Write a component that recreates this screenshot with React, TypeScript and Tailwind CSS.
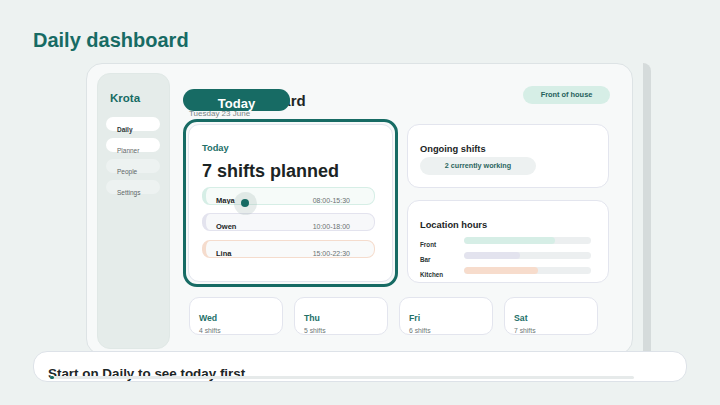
import React from "react";

const shifts = [
  { name: "Maya", time: "08:00-15:30", row: "border-[#d6eee6] bg-[#f6fbf9]" },
  { name: "Owen", time: "10:00-18:00", row: "border-[#e3e3ee] bg-[#f7f8fa]" },
  { name: "Lina", time: "15:00-22:30", row: "border-[#f5dccd] bg-[#f9fafa]" },
];

const hours = [
  { label: "Front", pct: 72, fill: "bg-[#d6eee6]" },
  { label: "Bar", pct: 44, fill: "bg-[#e3e3ee]" },
  { label: "Kitchen", pct: 58, fill: "bg-[#f7dccc]" },
];

const days = [
  { d: "Wed", n: "4 shifts" },
  { d: "Thu", n: "5 shifts" },
  { d: "Fri", n: "6 shifts" },
  { d: "Sat", n: "7 shifts" },
];

const nav = [
  { label: "Daily", cls: "bg-white font-bold text-[#2a3636]" },
  { label: "Planner", cls: "bg-white text-[#5b6565]" },
  { label: "People", cls: "bg-[#edf2f1] text-[#5b6565]" },
  { label: "Settings", cls: "bg-[#edf2f1] text-[#5b6565]" },
];

export default function App() {
  return (
    <div className="relative flex h-[405px] w-[720px] flex-col overflow-hidden bg-[#edf2f1] font-['Liberation_Sans',Arial,sans-serif]">
      <h1 className="ml-[33px] mt-[28px] text-[20px] font-bold leading-[24px] text-[#176b64]">
        Daily dashboard
      </h1>

      {/* back strip of the device */}
      <div className="absolute left-[643px] top-[63px] h-[288px] w-[8px] rounded-tr-[10px] bg-[#d5dbdb]" />

      {/* device frame */}
      <div className="relative ml-[86px] mt-[11px] flex h-[292px] w-[547px] gap-[13px] rounded-[16px] border border-[#dde3e5] bg-[#f7f9f9] pb-[5px] pl-[10px] pt-[9px]">
        {/* sidebar */}
        <div className="flex w-[73px] flex-col rounded-[13px] border border-[#e0e8e6] bg-[#e5ecea] pl-[8px] pt-[17px]">
          <div className="pl-[4px] text-[11.5px] font-bold leading-[14px] text-[#176b64]">Krota</div>
          <div className="mt-[12px] flex flex-col gap-[7px]">
            {nav.map((n) => (
              <div
                key={n.label}
                className={`h-[14px] w-[54px] rounded-[7px] pl-[11px] pt-[8.5px] text-[6.5px] leading-[8px] ${n.cls}`}
              >
                {n.label}
              </div>
            ))}
          </div>
        </div>

        {/* main */}
        <div className="flex w-[427px] flex-col pt-[14px]">
          {/* header */}
          <div className="relative flex h-[32px] justify-between">
            <div className="pl-[6px] pt-[6px]">
              <div className="text-[15px] font-bold leading-[16px] text-[#1d2626]">Daily dashboard</div>
              <div className="mt-[0px] text-[8px] leading-[10px] text-[#7a8484]">Tuesday 23 June</div>
            </div>
            <div className="absolute left-0 top-[2px] flex h-[22px] w-[107px] justify-center rounded-[11px] bg-[#176b64] pt-[8px] text-[13px] font-bold leading-[13px] text-white">
              Today
            </div>
            <div className="mt-[-1px] flex h-[18px] w-[87px] items-center justify-center rounded-full bg-[#d6eee6] text-[7.4px] font-bold text-[#25605b]">
              Front of house
            </div>
          </div>

          {/* content row */}
          <div className="flex gap-[9px]">
            {/* Today card */}
            <div className="relative h-[168px] w-[215px] rounded-[14px] border-[3px] border-[#176b64] p-[2px]">
              <div className="h-full w-full rounded-[11px] border border-[#e3e5ee] bg-white pl-[13px] pt-[18px]">
                <div className="text-[9.3px] font-bold leading-[11px] text-[#237068]">Today</div>
                <div className="mt-[6px] text-[18px] font-bold leading-[22px] text-[#1b2424]">7 shifts planned</div>
                <div className="mt-[4.5px] flex flex-col gap-[8.5px]">
                  {shifts.map((s) => (
                    <div
                      key={s.name}
                      className={`flex h-[18px] w-[173px] justify-between overflow-hidden rounded-[8px] border border-l-[4px] pl-[10px] pr-[24px] pt-[8px] text-[7px] leading-[10px] ${s.row}`}
                    >
                      <span className="text-[7.5px] font-bold text-[#1d2626]">{s.name}</span>
                      <span className="text-[#6a7272]">{s.time}</span>
                    </div>
                  ))}
                </div>
              </div>
              {/* cursor */}
              <div className="absolute left-[47.5px] top-[69.5px] h-[23px] w-[23px] rounded-full bg-[#9fb3b1]/25" />
              <div className="absolute left-[55px] top-[77px] h-[8px] w-[8px] rounded-full bg-[#176b64]" />
            </div>

            {/* right column */}
            <div className="mt-[5px] flex w-[202px] flex-col gap-[12px]">
              <div className="h-[64px] rounded-[12px] border border-[#e3e5ee] bg-white pl-[12px] pt-[19px]">
                <div className="text-[9.3px] font-bold leading-[11px] text-[#1b2424]">Ongoing shifts</div>
                <div className="mt-[2px] flex h-[18px] w-[116px] items-center justify-center rounded-full bg-[#edf1f1] text-[7.2px] font-bold text-[#2b6560]">
                  2 currently working
                </div>
              </div>
              <div className="h-[83px] rounded-[12px] border border-[#e3e5ee] bg-white pl-[12px] pt-[19px]">
                <div className="text-[9.3px] font-bold leading-[11px] text-[#1b2424]">Location hours</div>
                <div className="mt-[6px] flex flex-col">
                  {hours.map((h) => (
                    <div key={h.label} className="flex h-[15px] items-start">
                      <div className="w-[44px] pt-[4px] text-[6.3px] font-bold leading-[8px] text-[#2a3434]">{h.label}</div>
                      <div className="h-[7px] w-[127px] overflow-hidden rounded-full bg-[#eceff0]">
                        <div className={`h-full rounded-full ${h.fill}`} style={{ width: `${h.pct}%` }} />
                      </div>
                    </div>
                  ))}
                </div>
              </div>
            </div>
          </div>

          {/* day cards */}
          <div className="mt-[10px] flex gap-[11px] pl-[6px]">
            {days.map((d) => (
              <div key={d.d} className="h-[38px] w-[94px] rounded-[10px] border border-[#e3e5ee] bg-white pl-[9px] pt-[15px]">
                <div className="text-[8.7px] font-bold leading-[10px] text-[#237068]">{d.d}</div>
                <div className="mt-[3.5px] text-[6.8px] leading-[8px] text-[#6e7777]">{d.n}</div>
              </div>
            ))}
          </div>
        </div>
      </div>

      {/* bottom banner */}
      <div className="absolute left-[33px] top-[351px] h-[31px] w-[654px] overflow-hidden rounded-[14px] border border-[#dde2e8] bg-white pl-[14px] pt-[13.5px]">
        <div className="text-[13.4px] font-bold leading-[16px] text-[#1d2626]">Start on Daily to see today first</div>
        <div className="absolute left-[16px] top-[23.5px] h-[3.5px] w-[584px] rounded-full bg-[#e6eaea]">
          <div className="h-[3.5px] w-[4px] rounded-full bg-[#176b64]" />
        </div>
      </div>
    </div>
  );
}
